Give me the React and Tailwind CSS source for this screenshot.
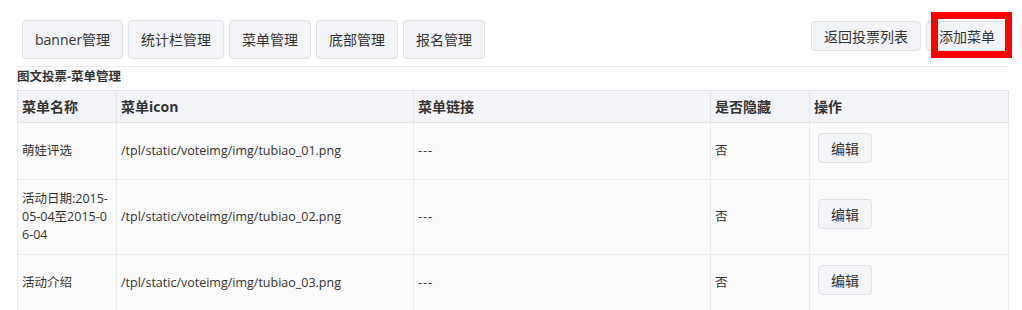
import React from "react";

const tabs = ["banner管理", "统计栏管理", "菜单管理", "底部管理", "报名管理"];

const rows = [
  { name: "萌娃评选", icon: "/tpl/static/voteimg/img/tubiao_01.png" },
  { name: "活动日期:2015-05-04至2015-06-04", icon: "/tpl/static/voteimg/img/tubiao_02.png" },
  { name: "活动介绍", icon: "/tpl/static/voteimg/img/tubiao_03.png" },
];

const font = { fontFamily: '"Open Sans", "Noto Sans CJK SC", sans-serif' };

export default function App() {
  return (
    <div className="min-h-[310px] bg-white text-[#333] pl-[17px] pr-[14px] pt-[20px]" style={font}>
      {/* toolbar */}
      <div className="flex justify-between items-start pl-[5px] pb-[7px] border-b border-[#ececec]">
        <div className="flex gap-[5px]">
          {tabs.map((t) => (
            <button
              key={t}
              className="h-[39px] px-[12px] text-[14px] text-[#333] bg-[#f3f4f7] border border-[#dfe1e6] rounded-[4px]"
            >
              {t}
            </button>
          ))}
        </div>
        <div className="flex gap-[5px] mt-[1px]">
          <button className="h-[30px] px-[12px] text-[14px] text-[#333] bg-[#f3f4f7] border border-[#dfe1e6] rounded-[4px]">
            返回投票列表
          </button>
          <div className="relative">
            <button className="h-[30px] px-[12px] text-[14px] text-[#333] bg-[#f3f4f7] border border-[#dfe1e6] rounded-[4px]">
              添加菜单
            </button>
            <span className="absolute left-[5px] -right-[4px] -top-[9px] -bottom-[7px] border-[7px] border-[#ff0000]"></span>
          </div>
        </div>
      </div>

      <div className="text-[12.5px] font-bold leading-[20px] mb-[3px]">图文投票-菜单管理</div>

      <table className="w-[991px] border-collapse table-fixed text-[12.5px]">
        <colgroup>
          <col className="w-[99px]" />
          <col className="w-[297px]" />
          <col className="w-[297px]" />
          <col className="w-[99px]" />
          <col className="w-[199px]" />
        </colgroup>
        <thead>
          <tr className="bg-[#f3f4f7]">
            {["菜单名称", "菜单icon", "菜单链接", "是否隐藏", "操作"].map((h) => (
              <th
                key={h}
                className="h-[32px] px-[4px] text-left text-[14px] font-bold border border-[#e3e4e8]"
              >
                {h}
              </th>
            ))}
          </tr>
        </thead>
        <tbody>
          {rows.map((r) => (
            <tr key={r.icon} className="bg-[#fbfbfb]">
              <td className="px-[4px] py-[10px] leading-[18px] border border-[#ececec] align-middle break-all">
                {r.name}
              </td>
              <td className="px-[4px] py-[10px] border border-[#ececec] align-middle">{r.icon}</td>
              <td className="px-[4px] py-[10px] border border-[#ececec] align-middle tracking-[1px]">---</td>
              <td className="px-[4px] py-[10px] border border-[#ececec] align-middle">否</td>
              <td className="px-[8px] py-[10px] border border-[#ececec] align-middle">
                <button className="h-[30px] px-[12px] mb-[6px] text-[14px] text-[#333] bg-[#f3f4f7] border border-[#dfe1e6] rounded-[4px]">
                  编辑
                </button>
              </td>
            </tr>
          ))}
        </tbody>
      </table>
    </div>
  );
}
